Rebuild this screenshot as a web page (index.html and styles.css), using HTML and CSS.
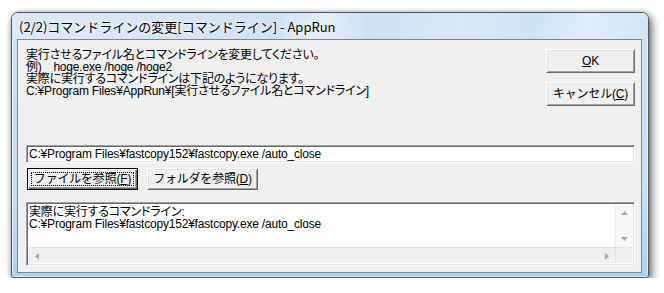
FILE: index.html
```html
<!DOCTYPE html>
<html>
<head>
  <meta charset="utf-8">
  <title>AppRun</title>
  <link rel="stylesheet" href="styles.css">
</head>
<body>
  <div class="window">
    <div class="titlebar">
      <span class="title">(2/2)コマンドラインの変更[コマンドライン] - AppRun</span>
    </div>

    <div class="client">
      <div class="top-row">
        <div class="message">
          <div>実行させるファイル名とコマンドラインを変更してください。</div>
          <div>例)　hoge.exe /hoge /hoge2</div>
          <div>実際に実行するコマンドラインは下記のようになります。</div>
          <div>C:¥Program Files¥AppRun¥[実行させるファイル名とコマンドライン]</div>
        </div>
        <div class="side-buttons">
          <button class="btn btn-side"><u>O</u>K</button>
          <button class="btn btn-side">キャンセル(<u>C</u>)</button>
        </div>
      </div>

      <div class="cmd-input">C:¥Program Files¥fastcopy152¥fastcopy.exe /auto_close</div>

      <div class="browse-row">
        <button class="btn btn-browse btn-default"><span class="focus-rect">ファイルを参照(<u>F</u>)</span></button>
        <button class="btn btn-browse">フォルダを参照(<u>D</u>)</button>
      </div>

      <!-- preview of the resulting command line -->
      <div class="preview">
        <div class="preview-text">
          <div>実際に実行するコマンドライン:</div>
          <div>C:¥Program Files¥fastcopy152¥fastcopy.exe /auto_close</div>
        </div>
        <div class="vscroll">
          <span class="arrow-box">
            <svg width="7" height="4" viewBox="0 0 7 4"><path d="M0 4 L3.5 0 L7 4 Z" fill="#a8a8a8"/></svg>
          </span>
          <span class="arrow-box">
            <svg width="7" height="4" viewBox="0 0 7 4"><path d="M0 0 L3.5 4 L7 0 Z" fill="#a8a8a8"/></svg>
          </span>
        </div>
        <div class="hscroll">
          <span class="arrow-box">
            <svg width="4" height="7" viewBox="0 0 4 7"><path d="M4 0 L0 3.5 L4 7 Z" fill="#a8a8a8"/></svg>
          </span>
          <span class="arrow-box">
            <svg width="4" height="7" viewBox="0 0 4 7"><path d="M0 0 L4 3.5 L0 7 Z" fill="#a8a8a8"/></svg>
          </span>
        </div>
        <div class="corner"></div>
      </div>
    </div>
  </div>
</body>
</html>
```

FILE: styles.css
```css
body {
  margin: 0;
  background-color: #fff;
  font-family: "Liberation Sans", "Noto Sans CJK JP", sans-serif;
  font-size: 12px;
  font-feature-settings: "palt";
  letter-spacing: -0.2px;
  color: #000;
}
.window {
  margin: 12px 0 0 11px;
  width: 638px;
  height: 266px;
  box-sizing: border-box;
  display: flex;
  flex-direction: column;
  padding: 0 6px 4px 5px;
  border: 1px solid #4b5661;
  border-radius: 7px 7px 3px 3px;
  background: linear-gradient(180deg, #cfe2f4 0%, #c6def3 70%, #aad3f1 100%);
  box-shadow: inset 0 0 0 1px rgba(255, 255, 255, 0.6), 3px 4px 9px rgba(0, 0, 0, 0.55), 0 0 5px rgba(0, 0, 0, 0.25);
}
.titlebar {
  height: 26px;
  flex-shrink: 0;
  display: flex;
  align-items: center;
  padding-left: 7px;
  margin: 0 -6px 0 -5px;
  padding-right: 11px;
  border-radius: 6px 6px 0 0;
  background: linear-gradient(100deg, #dce9f6 0%, #d3e4f6 30%, #cfe2f5 42%, #e4effa 49%, #cde0f3 56%, #d9e8f8 70%, #cfe3f6 82%, #e0edfa 90%, #d2e5f7 100%);
}
.title {
  font-family: "Noto Sans CJK JP", sans-serif;
  font-size: 13px;
  font-feature-settings: normal;
  letter-spacing: 0;
  text-shadow: 0 0 6px #fff, 0 0 3px #fff;
}
.client {
  width: 625px;
  height: 234px;
  box-sizing: border-box;
  border: 1px solid #7b8691;
  background-color: #f0f0f0;
  padding: 8px 6px 6px 8px;
}
.top-row {
  display: flex;
  justify-content: space-between;
  height: 97px;
}
.message {
  line-height: 12px;
  padding-top: 1px;
}
.side-buttons {
  display: flex;
  flex-direction: column;
  gap: 9px;
  padding-top: 1px;
}
.btn {
  font-family: inherit;
  font-size: 12px;
  letter-spacing: inherit;
  color: #000;
  background-color: #f0f0f0;
  border: 1px solid;
  border-color: #fff #696969 #696969 #fff;
  box-shadow: inset 1px 1px #e3e3e3, inset -1px -1px #a0a0a0;
  padding: 0;
  line-height: 12px;
}
.btn-side {
  width: 89px;
  height: 24px;
}
.cmd-input {
  height: 18px;
  box-sizing: border-box;
  background-color: #fff;
  border: 1px solid;
  border-color: #a0a0a0 #fff #fff #a0a0a0;
  box-shadow: inset 1px 1px #696969, inset -1px -1px #e3e3e3;
  padding: 2px 0 0 2px;
  line-height: 12px;
  white-space: nowrap;
}
.browse-row {
  display: flex;
  gap: 9px;
  margin-top: 5px;
  padding-left: 1px;
}
.btn-browse {
  width: 111px;
  height: 22px;
}
.btn-default {
  border-color: #000;
  box-shadow: inset 1px 1px #fff, inset -1px -1px #696969, inset -2px -2px #a0a0a0;
  display: flex;
  padding: 3px;
}
.focus-rect {
  flex: 1;
  display: flex;
  align-items: center;
  justify-content: center;
  border: 1px dotted #000;
}
.preview {
  margin-top: 12px;
  height: 64px;
  box-sizing: border-box;
  display: grid;
  grid-template-columns: 1fr 17px;
  grid-template-rows: 1fr 16px;
  background-color: #fff;
  border: 1px solid;
  border-color: #a0a0a0 #fff #fff #a0a0a0;
  box-shadow: inset 1px 1px #696969, inset -1px -1px #e3e3e3;
  padding: 2px;
}
.preview-text {
  line-height: 12px;
  padding-top: 1px;
  white-space: nowrap;
  overflow: hidden;
}
.vscroll {
  display: flex;
  flex-direction: column;
  justify-content: space-between;
  background-color: #f7f7f7;
  border-left: 1px solid #ececec;
}
.hscroll {
  display: flex;
  justify-content: space-between;
  background-color: #efefef;
  border-top: 1px solid #e2e2e2;
}
.corner {
  background-color: #f0f0f0;
  border-top: 1px solid #e2e2e2;
  border-left: 1px solid #e2e2e2;
}
.arrow-box {
  width: 16px;
  height: 16px;
  display: flex;
  align-items: center;
  justify-content: center;
}
```
